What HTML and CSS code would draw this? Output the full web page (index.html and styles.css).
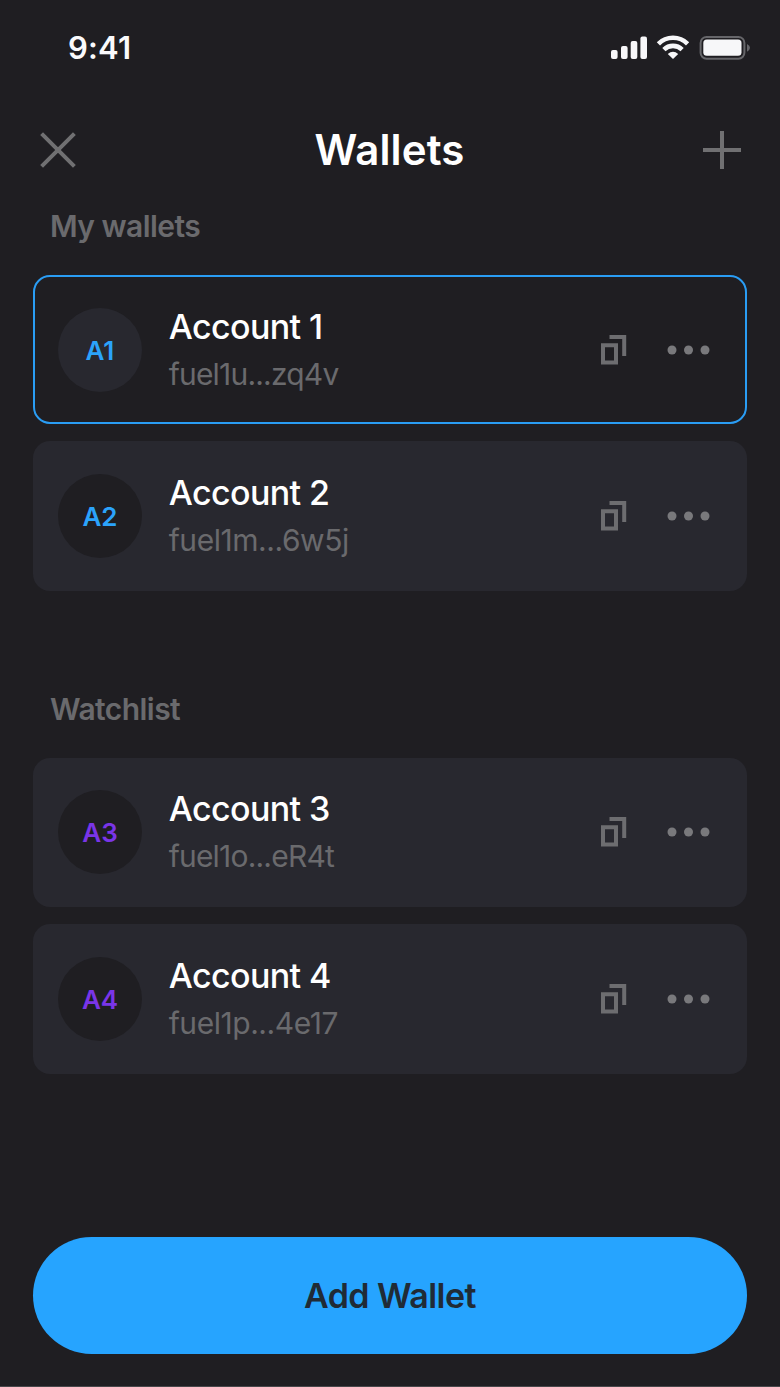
FILE: index.html
```html
<!DOCTYPE html>
<html lang="en">
<head>
<meta charset="utf-8">
<title>Wallets</title>
<link rel="stylesheet" href="styles.css">
</head>
<body>
<svg class="defs" width="0" height="0" aria-hidden="true">
  <symbol id="copy" viewBox="0 0 26 30">
    <path d="M2 10.3H15V27.5H2Z M8.5 2H23.2V21" fill="none" stroke="currentColor" stroke-width="4"/>
  </symbol>
  <symbol id="more" viewBox="0 0 43 10">
    <g fill="currentColor"><circle cx="5" cy="5" r="4.5"/><circle cx="21.5" cy="5" r="4.5"/><circle cx="38" cy="5" r="4.5"/></g>
  </symbol>
</svg>
<main class="screen">
  <div class="status">
    <span class="time">9:41</span>
    <svg class="indicators" width="140" height="26" viewBox="0 0 140 26">
      <g fill="#f7f7f9">
        <rect x="1" y="15" width="6.6" height="9" rx="2"/>
        <rect x="11" y="11" width="6.6" height="13" rx="2"/>
        <rect x="20.7" y="6" width="6.6" height="18" rx="2"/>
        <rect x="30.4" y="1.5" width="6.6" height="22.5" rx="2"/>
      </g>
      <g fill="none" stroke="#f7f7f9" stroke-width="4.6">
        <path d="M48.4 8.8A20.8 20.8 0 0 1 77.6 8.8"/>
        <path d="M53.9 14.6A13 13 0 0 1 72.1 14.6"/>
      </g>
      <path d="M57.8 18.9Q63 14.6 68.2 18.9L63 24Z" fill="#f7f7f9"/>
      <rect x="90.6" y="1.9" width="43.8" height="21.8" rx="6" fill="none" stroke="#66666a" stroke-width="2"/>
      <rect x="93.3" y="4.6" width="38.2" height="16.2" rx="3.5" fill="#f7f7f9"/>
      <path d="M137 9Q140 10.5 140 12.8T137 16.7Z" fill="#66666a"/>
    </svg>
  </div>
  <header class="header">
    <svg width="38" height="38" viewBox="0 0 38 38"><path d="M2.6 2.6L35.4 35.4M35.4 2.6L2.6 35.4" stroke="#707072" stroke-width="4"/></svg>
    <h1 class="title">Wallets</h1>
    <svg width="38" height="38" viewBox="0 0 38 38"><path d="M19 0V38M0 19H38" stroke="#707072" stroke-width="4"/></svg>
  </header>

  <section class="group">
    <h2 class="label">My wallets</h2>
    <article class="card selected">
      <div class="avatar blue">A1</div>
      <div class="info"><div class="name">Account 1</div><div class="address tight">fuel1u...zq4v</div></div>
      <svg class="copy"><use href="#copy"/></svg><svg class="more"><use href="#more"/></svg>
    </article>
    <article class="card">
      <div class="avatar blue">A2</div>
      <div class="info"><div class="name">Account 2</div><div class="address">fuel1m...6w5j</div></div>
      <svg class="copy"><use href="#copy"/></svg><svg class="more"><use href="#more"/></svg>
    </article>
  </section>

  <section class="group watch">
    <h2 class="label">Watchlist</h2>
    <article class="card">
      <div class="avatar purple">A3</div>
      <div class="info"><div class="name">Account 3</div><div class="address tight">fuel1o...eR4t</div></div>
      <svg class="copy"><use href="#copy"/></svg><svg class="more"><use href="#more"/></svg>
    </article>
    <article class="card">
      <div class="avatar purple">A4</div>
      <div class="info"><div class="name">Account 4</div><div class="address">fuel1p...4e17</div></div>
      <svg class="copy"><use href="#copy"/></svg><svg class="more"><use href="#more"/></svg>
    </article>
  </section>
  <button class="add">Add Wallet</button>
</main>
</body>
</html>
```
FILE: styles.css
```css
* { box-sizing: border-box; }
body { margin: 0; background: #1f1e22; font-family: Inter, "Liberation Sans", sans-serif; }
.defs { display: block; position: absolute; }
.screen { display: flex; flex-direction: column; width: 780px; height: 1387px; padding: 0 33px; border-bottom: 1px solid #48474b; }
.status { display: flex; justify-content: space-between; align-items: center; height: 96px; padding: 0 0 0 35px; margin-right: -3px; }
.time { color: #fafafc; font-size: 31px; font-weight: 600; line-height: 40px; letter-spacing: 0.2px; }
.indicators { display: block; }
.header { display: flex; align-items: center; justify-content: space-between; height: 108px; padding: 0 6px; }
.title { margin: 0; color: #fff; font-size: 42px; font-weight: 600; line-height: 48px; padding: 0 1px 1px 0; letter-spacing: 0.15px; }
.group { display: flex; flex-direction: column; gap: 17px; }
.label { margin: 0 0 10px; padding: 1px 0 0 17px; color: #6a6a6d; font-size: 30px; font-weight: 600; line-height: 43px; letter-spacing: -0.55px; }
.watch { margin-top: 96px; }
.card { display: flex; align-items: center; height: 149.4px; padding: 0 37px 0 25px; background: #28282f; border-radius: 17px; }
.selected { padding: 0 35px 0 23px; background: #1f1e22; border: 2px solid #2a9df4; }
.avatar { width: 84px; height: 84px; border-radius: 50%; background: #1f1e22; font-size: 26px; font-weight: 600; line-height: 86px; text-align: center; }
.selected .avatar { background: #28282f; }
.blue { color: #2ba3fb; }
.purple { color: #7a35e8; }
.info { flex: 1; margin-left: 26.7px; padding-top: 1px; }
.name { color: #fff; font-size: 34px; font-weight: 500; line-height: 48px; letter-spacing: -0.6px; }
.address { color: #6a6a6d; font-size: 30px; line-height: 47px; letter-spacing: -0.45px; }
.tight { letter-spacing: -0.8px; }
.copy { width: 26px; height: 30px; margin-right: 40px; color: #6d6d70; }
.more { width: 43px; height: 10px; color: #79797c; }
.add { height: 116.5px; margin-top: 163.9px; padding: 0; border: 0; border-radius: 59px; background: #26a4ff; color: #202b36; font: 600 34px/40px Inter, "Liberation Sans", sans-serif; letter-spacing: -0.55px; }
```
